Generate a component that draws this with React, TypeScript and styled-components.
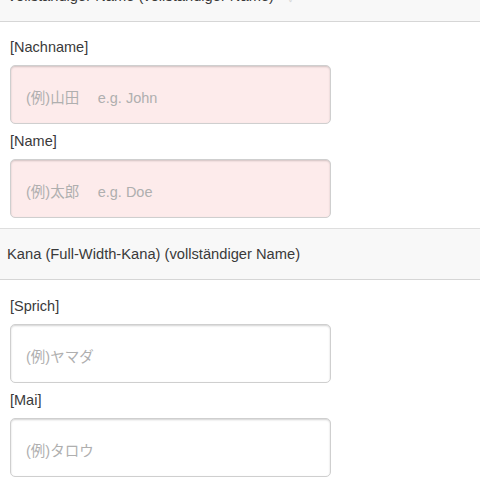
import React from "react";
import styled, { createGlobalStyle } from "styled-components";

const GlobalStyle = createGlobalStyle`
  html, body {
    margin: 0;
    padding: 0;
    background: #ffffff;
  }
  body {
    font-family: "Liberation Sans", "Noto Sans CJK JP", Arial, sans-serif;
    color: #333333;
    overflow: hidden;
  }
`;

const Page = styled.div`
  width: 480px;
  display: flex;
  flex-direction: column;
`;

const SectionHeader = styled.div<{ $first?: boolean }>`
  height: 52px;
  box-sizing: border-box;
  margin-top: ${(p) => (p.$first ? "-30px" : "0")};
  display: flex;
  align-items: center;
  gap: 14px;
  padding-left: 7px;
  background: #f8f8f8;
  border-top: 1px solid #dedede;
  border-bottom: 1px solid #d6d6d6;
  font-size: 14.7px;
  color: #3a3a3a;
`;

const Toggle = styled.span`
  color: #d8d8d8;
  font-size: 12px;
`;

const Section = styled.div<{ $top: number }>`
  display: flex;
  flex-direction: column;
  padding: ${(p) => p.$top}px 10px 10px;
`;

const Field = styled.div`
  display: flex;
  flex-direction: column;
  gap: 8px;
  & + & {
    margin-top: 7px;
  }
`;

const Label = styled.label`
  font-size: 14.5px;
  line-height: 20px;
  color: #3a3a3a;
`;

const TextInput = styled.input<{ $invalid?: boolean }>`
  appearance: none;
  box-sizing: border-box;
  width: 321px;
  height: 59px;
  padding: 6px 15px 0;
  border: 1px solid #cfcfcf;
  border-radius: 5px;
  background: ${(p) => (p.$invalid ? "#fdebeb" : "#ffffff")};
  box-shadow: inset 0 1px 2px rgba(0, 0, 0, 0.18);
  font-family: "Liberation Sans", "Noto Sans CJK JP", Arial, sans-serif;
  font-size: 14.5px;
  color: #333333;
  outline: none;

  &::placeholder {
    color: #afafaf;
  }
`;

type FieldDef = { label: string; placeholder: string };

const fullName: FieldDef[] = [
  { label: "[Nachname]", placeholder: "(例)山田　 e.g. John" },
  { label: "[Name]", placeholder: "(例)太郎　 e.g. Doe" },
];

const kanaName: FieldDef[] = [
  { label: "[Sprich]", placeholder: "(例)ヤマダ" },
  { label: "[Mai]", placeholder: "(例)タロウ" },
];

const App = (): React.ReactElement => {
  return (
    <Page>
      <GlobalStyle />
      <SectionHeader $first>
        Vollständiger Name (vollständiger Name)
        <Toggle>✓</Toggle>
      </SectionHeader>
      <Section $top={15}>
        {fullName.map((f) => (
          <Field key={f.label}>
            <Label>{f.label}</Label>
            <TextInput $invalid placeholder={f.placeholder} />
          </Field>
        ))}
      </Section>
      <SectionHeader>Kana (Full-Width-Kana) (vollständiger Name)</SectionHeader>
      <Section $top={16}>
        {kanaName.map((f) => (
          <Field key={f.label}>
            <Label>{f.label}</Label>
            <TextInput placeholder={f.placeholder} />
          </Field>
        ))}
      </Section>
    </Page>
  );
};

export default App;
